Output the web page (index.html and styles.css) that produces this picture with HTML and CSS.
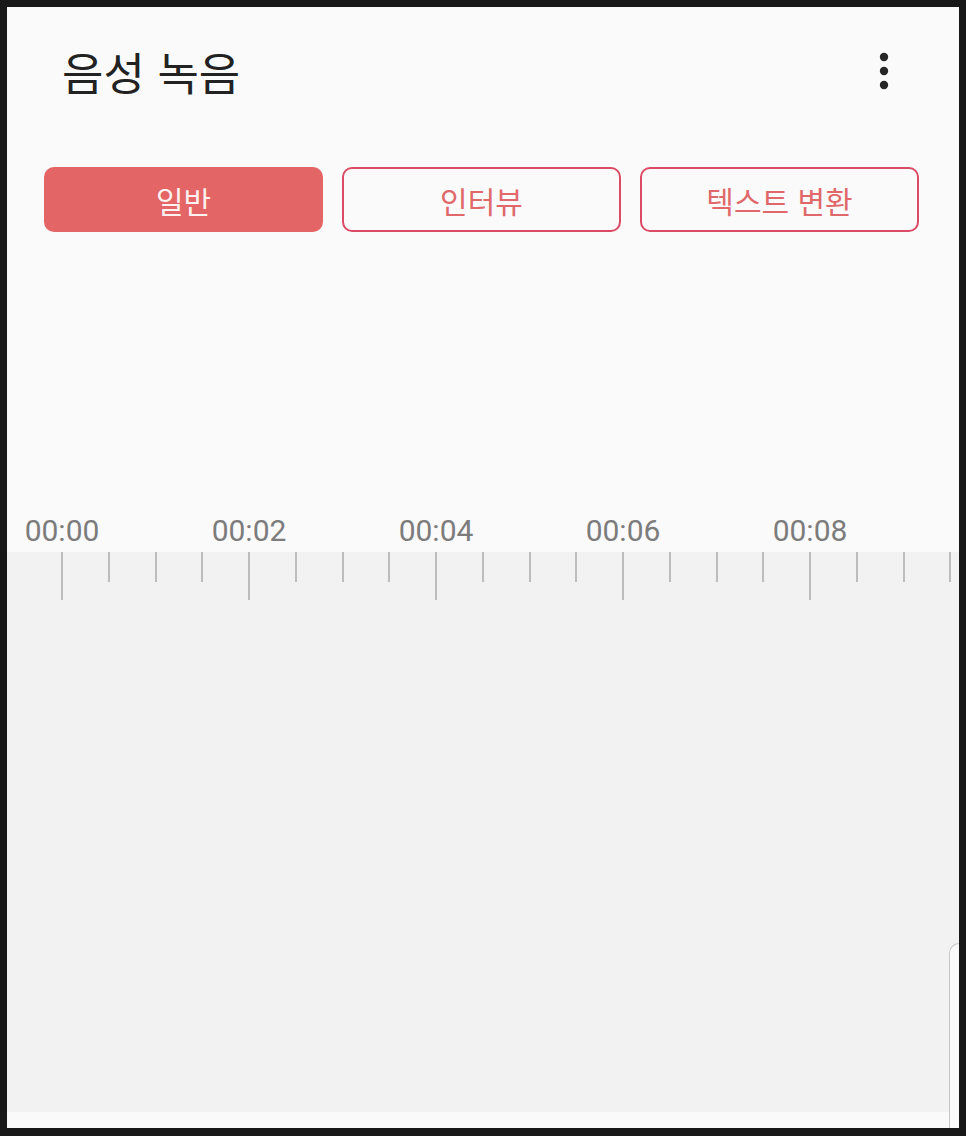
FILE: index.html
```html
<!DOCTYPE html>
<html lang="ko">
<head>
  <meta charset="UTF-8">
  <meta name="viewport" content="width=device-width, initial-scale=1.0">
  <title>음성 녹음</title>
  <link rel="stylesheet" href="styles.css">
</head>
<body>
  <div class="app">
    <header class="top-bar">
      <h1 class="title">음성 녹음</h1>
      <div class="more-btn">
        <svg width="24" height="40" viewBox="0 0 24 40">
          <circle cx="12" cy="6" r="4.2" fill="#262626"/>
          <circle cx="12" cy="20" r="4.2" fill="#262626"/>
          <circle cx="12" cy="34" r="4.2" fill="#262626"/>
        </svg>
      </div>
    </header>

    <div class="modes">
      <button class="mode active">일반</button>
      <button class="mode">인터뷰</button>
      <button class="mode">텍스트 변환</button>
    </div>

    <div class="spacer"></div>

    <div class="labels">
      <span class="label">00:00</span>
      <span class="label">00:02</span>
      <span class="label">00:04</span>
      <span class="label">00:06</span>
      <span class="label">00:08</span>
    </div>

    <div class="wave-area">
      <div class="ruler" id="ruler"></div>
    </div>
    <div class="bottom-strip"></div>

    <div class="side-panel"></div>
  </div>

  <script>
    // ruler ticks, a major one every 4 ticks
    const ruler = document.getElementById('ruler');
    for (let i = 0; i < 20; i++) {
      const tick = document.createElement('div');
      tick.classList.add('tick');
      if (i % 4 === 0) {
        tick.classList.add('major');
      }
      ruler.appendChild(tick);
    }
  </script>
</body>
</html>
```

FILE: styles.css
```css
body {
  margin: 0;
  background-color: #181818;
  font-family: "Noto Sans CJK KR", "Noto Sans", sans-serif;
}

.app {
  position: relative;
  margin: 7px 7px 8px 7px;
  height: 1121px;
  background-color: #fafafa;
  display: flex;
  flex-direction: column;
  overflow: hidden;
}

.top-bar {
  height: 128px;
  display: flex;
  align-items: center;
  justify-content: space-between;
  padding: 0 63px 2px 55px;
  flex-shrink: 0;
}

.title {
  margin: 0;
  font-size: 45px;
  font-weight: 400;
  color: #222222;
  line-height: 1;
}

.more-btn {
  display: flex;
  align-items: center;
}

.modes {
  display: flex;
  gap: 19px;
  margin-top: 30px;
  padding: 0 40px 0 37px;
  flex-shrink: 0;
}

.mode {
  flex: 1;
  height: 65px;
  border: 2px solid #dc4b66;
  border-radius: 10px;
  background-color: #fafafa;
  color: #e0686b;
  font-family: "Noto Sans CJK KR", "Noto Sans", sans-serif;
  font-size: 30px;
  font-weight: 400;
  padding: 0;
}

.mode.active {
  background-color: #e36565;
  border-color: #e36565;
  color: #fdf1f1;
}

.spacer {
  height: 277px;
  flex-shrink: 0;
}

.labels {
  display: flex;
  height: 43px;
  margin-left: -38.5px;
  flex-shrink: 0;
}

.label {
  width: 187px;
  flex-shrink: 0;
  text-align: center;
  font-family: Roboto, "Liberation Sans", sans-serif;
  font-size: 30px;
  line-height: 43px;
  color: #7c7c7c;
}

.wave-area {
  flex: 1;
  background-color: #f2f2f2;
}

.ruler {
  display: flex;
  align-items: flex-start;
  padding-left: 54px;
}

.tick {
  width: 46.75px;
  height: 30px;
  flex-shrink: 0;
  box-sizing: border-box;
  border-left: 2px solid #bdbdbd;
}

.tick.major {
  height: 48px;
}

.bottom-strip {
  height: 16px;
  flex-shrink: 0;
}

.side-panel {
  position: absolute;
  right: 0;
  top: 936px;
  bottom: 0;
  width: 9px;
  background-color: #fafafa;
  border-left: 1px solid #c6c6c6;
  border-top: 1px solid #c6c6c6;
  border-top-left-radius: 14px;
}
```
